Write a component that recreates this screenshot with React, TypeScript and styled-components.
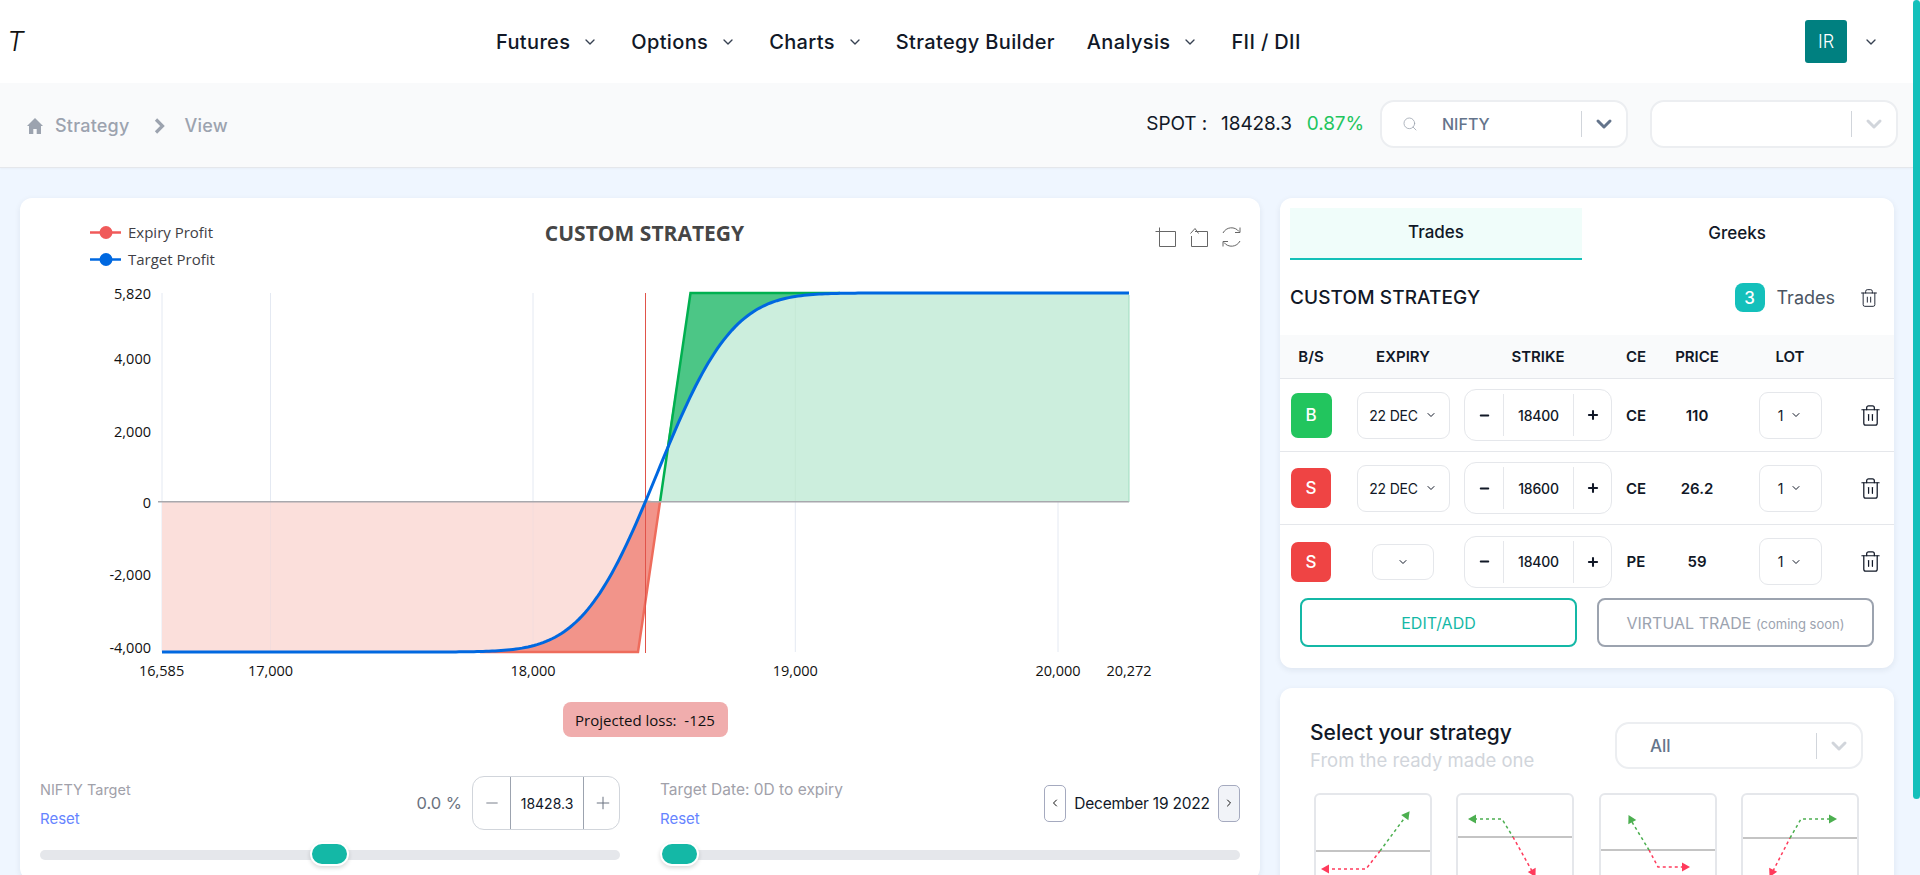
import React from "react";
import styled, { createGlobalStyle } from "styled-components";
import { ChevronDown, ChevronLeft, ChevronRight, Minus, Plus, Search, Trash2 } from "lucide-react";

const UI = `Inter, "Noto Sans", sans-serif`;
const CHART = `"Open Sans", "Noto Sans", sans-serif`;

const Global = createGlobalStyle`
  html { background: #eff6ff; }
  body { margin: 0; background: #eff6ff; font-family: ${UI}; color: #111827; }
  * { box-sizing: border-box; }
`;

const Page = styled.div`min-height: 958px; width: 1913px;`;
const ScrollThumb = styled.div`
  position: fixed; top: 0; right: 0; width: 7px; height: 799px; background: #14c0bb; border-radius: 4px;
`;

const Header = styled.header`
  height: 83px; background: #fff; display: flex; align-items: center; padding: 0 34px 0 7px;
`;
const Logo = styled.span`
  width: 489px; font: italic 300 27px ${UI}; color: #111;
`;
const Nav = styled.nav`display: flex; align-items: center; flex: 1;`;
const NavItem = styled.a<{ $gap?: number }>`
  display: flex; align-items: center; gap: 12px; margin-right: ${(p) => p.$gap ?? 33}px;
  font-size: 20px; font-weight: 500; color: #111827; letter-spacing: 0.35px; white-space: nowrap;
  svg { color: #374151; }
`;
const Avatar = styled.div`
  width: 42px; height: 43px; border-radius: 3px; background: #008080; color: #fff;
  display: flex; align-items: center; justify-content: center; font-size: 18px; font-weight: 300;
`;
const UserChevron = styled.span`display: flex; margin-left: 16px; color: #374151;`;

const SubBar = styled.div`
  height: 85px; background: #f9fafb; border-bottom: 1px solid #e5e7eb; box-shadow: 0 1px 2px rgba(0,0,0,.03);
  display: flex; align-items: center; justify-content: space-between; padding: 0 15px 0 27px;
`;
const Crumbs = styled.div`
  display: flex; align-items: center; color: #9ca3af; font-size: 18px; font-weight: 500; letter-spacing: 0.2px; margin-top: 1px;
`;
const Crumb = styled.span`margin-left: 12px;`;
const CrumbArrow = styled.svg`display: block; margin: 0 20px 0 24px;`;
const Spot = styled.div`display: flex; align-items: center; margin-top: -3px;`;
const SpotText = styled.span<{ $color?: string; $ml?: number }>`
  font-size: 19px; font-weight: 400; color: ${(p) => p.$color ?? "#111827"}; margin-left: ${(p) => p.$ml ?? 0}px;
  letter-spacing: -0.1px;
`;
const Select = styled.div<{ $w?: number; $ml?: number; $h?: number }>`
  width: ${(p) => p.$w ?? 248}px; height: ${(p) => p.$h ?? 48}px; margin-left: ${(p) => p.$ml ?? 0}px;
  background: #fff; border: 2px solid #eceef1; border-radius: 14px; display: flex; align-items: center;
  color: #64748b; font-size: 16px; font-weight: 500;
`;
const SelectIcon = styled.span`display: flex; margin-left: 20px; color: #9ca3af;`;
const SelectValue = styled.span<{ $ml: number; $size?: number }>`
  margin-left: ${(p) => p.$ml}px; font-size: ${(p) => p.$size ?? 16}px;
`;
const SelectArrow = styled.span<{ $muted?: boolean }>`
  margin-left: auto; width: 45px; height: 26px; border-left: 1px solid #d1d5db; display: flex;
  align-items: center; justify-content: center; color: ${(p) => (p.$muted ? "#d1d5db" : "#64748b")};
`;

const Main = styled.main`
  display: grid; grid-template-columns: 1240px 614px; gap: 20px; padding: 30px 19px 20px 20px; align-items: start;
`;
const Card = styled.section`
  background: #fff; border-radius: 12px; box-shadow: 0 2px 6px rgba(30,41,59,.08);
`;
const ChartDrawing = styled.svg`display: block; width: 1240px; height: 492px; font-family: ${CHART};`;
const PillRow = styled.div`display: flex; justify-content: flex-start; padding-left: 542.5px; margin-top: 12px;`;
const Pill = styled.div`
  width: 165px; height: 35px; border-radius: 8px; background: #f0adad; color: #111;
  font: 400 15px ${CHART}; display: flex; align-items: center; justify-content: center; white-space: pre;
`;
const Controls = styled.div`
  display: grid; grid-template-columns: 580px 580px; gap: 40px; padding: 39px 20px 20px;
`;
const ControlTop = styled.div`display: flex; align-items: center; justify-content: space-between; height: 54px;`;
const LabelBlock = styled.div`padding-top: 2px;`;
const Label = styled.div<{ $size: number }>`font-size: ${(p) => p.$size}px; color: #a1a1aa; line-height: 28px;`;
const ResetLink = styled.a`display: block; font-size: 15px; color: #6684ff; line-height: 28px; margin-top: 1px;`;
const Right = styled.div`display: flex; align-items: center;`;
const Pct = styled.span`font-size: 16.5px; color: #6b7280; margin-right: 10px;`;
const BigStepper = styled.div`
  width: 148px; height: 54px; border: 1px solid #d1d5db; border-radius: 12px; display: grid;
  grid-template-columns: 37px 74px 37px; align-items: stretch;
`;
const BigStepBtn = styled.span`display: flex; align-items: center; justify-content: center; color: #6b7280;`;
const BigStepValue = styled.span`
  display: flex; align-items: center; justify-content: center; font-size: 14px; color: #111827;
  border-left: 1px solid #9ca3af; border-right: 1px solid #9ca3af;
`;
const DateBtn = styled.span<{ $on?: boolean }>`
  width: 22px; height: 37px; border: 1px solid #a5aabf; border-radius: 5px; display: flex;
  align-items: center; justify-content: center; color: #111; background: ${(p) => (p.$on ? "#f1f3f8" : "#fff")};
`;
const DateText = styled.span`font-size: 15.5px; color: #111827; width: 152px; text-align: center; letter-spacing: -0.2px;`;
const Track = styled.div`height: 10px; margin-top: 20px; border-radius: 5px; background: #e5e7eb; position: relative;`;
const Thumb = styled.span<{ $left: number }>`
  position: absolute; left: ${(p) => p.$left}px; top: -8px; width: 39px; height: 24px; border-radius: 12px;
  background: #14b8a6; border: 2px solid #fff; box-shadow: 0 2px 4px rgba(0,0,0,.15);
`;

const Tabs = styled.div`display: grid; grid-template-columns: 292px 310px; padding: 10px 0 0 10px;`;
const Tab = styled.div<{ $on?: boolean }>`
  height: 52px; display: flex; align-items: center; justify-content: center; padding-bottom: ${(p) => (p.$on ? 2 : 0)}px;
  font-size: 17px; font-weight: 500; color: #111827;
  background: ${(p) => (p.$on ? "#f0fdfa" : "transparent")};
  border-bottom: 2px solid ${(p) => (p.$on ? "#14c0b8" : "transparent")};
`;
const TitleRow = styled.div`height: 75px; display: flex; align-items: center; padding: 0 15px 0 10px;`;
const StrategyTitle = styled.h2`margin: 0; font-size: 19px; font-weight: 500; letter-spacing: 0.1px; flex: 1; color: #111827;`;
const CountBadge = styled.span`
  width: 30px; height: 29px; border-radius: 8px; background: #14c0bb; color: #fff; display: flex;
  align-items: center; justify-content: center; font-size: 17px; font-weight: 500;
`;
const CountLabel = styled.span`font-size: 18px; color: #4b5563; margin: 0 24px 0 12px;`;
const TrashIcon = styled(Trash2)`color: #111827; display: block;`;

const COLS = "62px 122px 148px 48px 74px 112px 48px";
const TableHead = styled.div`
  display: grid; grid-template-columns: ${COLS}; height: 44px; align-items: center; text-align: center;
  background: #f9fafb; border-bottom: 1px solid #e5e7eb; font-size: 15px; font-weight: 600; color: #111827;
`;
const Row = styled.div<{ $last?: boolean }>`
  display: grid; grid-template-columns: ${COLS}; height: 73px; align-items: center; justify-items: center;
  border-bottom: ${(p) => (p.$last ? "none" : "1px solid #e5e7eb")}; font-size: 15px; font-weight: 600;
`;
const Side = styled.span<{ $buy?: boolean; $h: number }>`
  width: ${(p) => (p.$buy ? 41 : 40)}px; height: ${(p) => p.$h}px; border-radius: 7px; color: #fff;
  background: ${(p) => (p.$buy ? "#22c55e" : "#ef4444")}; display: flex; align-items: center;
  justify-content: center; font-size: 17px; font-weight: 500;
`;
const Pick = styled.span<{ $w: number; $h: number }>`
  width: ${(p) => p.$w}px; height: ${(p) => p.$h}px; border: 1px solid #e5e7eb; border-radius: 9px;
  display: flex; align-items: center; justify-content: center; gap: 7px; font-size: 14px; font-weight: 400; color: #111827;
  letter-spacing: -0.2px;
`;
const Stepper = styled.div`
  width: 148px; height: 52px; border: 1px solid #e5e7eb; border-radius: 12px; display: grid;
  grid-template-columns: 38px 71px 37px; align-items: center; justify-items: center;
`;
const StepValue = styled.span`
  width: 100%; height: 42px; display: flex; align-items: center; justify-content: center;
  border-left: 1px solid #e5e7eb; border-right: 1px solid #e5e7eb; font-size: 14px; font-weight: 500; letter-spacing: -0.2px;
`;
const Actions = styled.div`display: grid; grid-template-columns: 1fr 1fr; gap: 20px; padding: 0 20px 21px;`;
const ActionBtn = styled.button<{ $primary?: boolean }>`
  height: 49px; background: #fff; border-radius: 8px; font-family: ${UI}; font-size: 16px; font-weight: 400;
  border: 2px solid ${(p) => (p.$primary ? "#14b8a6" : "#9ca3af")}; color: ${(p) => (p.$primary ? "#14b8a6" : "#9ca3af")};
  padding: 0; white-space: nowrap;
`;
const Soon = styled.small`font-size: 13px;`;
const Stack = styled.div`display: flex; flex-direction: column; gap: 20px;`;
const PickerCard = styled(Card)`padding: 34px 31px 50px 30px; height: 250px;`;
const PickerHead = styled.div`display: flex; align-items: center; justify-content: space-between; height: 47px; margin-bottom: 24px;`;
const PickerText = styled.div`padding-top: 3px;`;
const PickerTitle = styled.div`font-size: 21px; font-weight: 500; color: #111827; line-height: 26px;`;
const PickerSub = styled.div`font-size: 18.5px; color: #d1d5db; line-height: 28px;`;
const MiniGrid = styled.div`display: grid; grid-template-columns: repeat(4, 118px); column-gap: 24.5px; padding-left: 3.5px;`;
const MiniCard = styled.div`height: 110px; border: 2px solid #e5e7eb; border-radius: 6px;`;
const MiniDrawing = styled.svg`display: block; width: 114px; height: 106px;`;

const erf = (x: number) => {
  const s = x < 0 ? -1 : 1;
  const a = Math.abs(x);
  const t = 1 / (1 + 0.5 * a);
  const r = t * Math.exp(-a * a - 1.26551223 + t * (1.00002368 + t * (0.37409196 + t * (0.09678418 + t * (-0.18628806 + t * (0.27886807 + t * (-1.13520398 + t * (1.48851587 + t * (-0.82215223 + t * 0.17087277)))))))));
  return s * (1 - r);
};
const curveY = (x: number) => 652 - 359 * 0.5 * (1 + erf((x - 657.5) / (59 * Math.SQRT2)));
const curve = (a: number, b: number, step = 3): string => {
  const pts: string[] = [];
  for (let x = a; x < b; x += step) pts.push(`${x} ${curveY(x).toFixed(2)}`);
  pts.push(`${b} ${curveY(b).toFixed(2)}`);
  return "M" + pts.join(" L");
};

const yTicks: [string, number][] = [["5,820", 293.5], ["4,000", 358.5], ["2,000", 431], ["0", 502], ["-2,000", 574.5], ["-4,000", 647]];
const xTicks: [string, number][] = [["16,585", 161.6], ["17,000", 270.5], ["18,000", 533], ["19,000", 795.3], ["20,000", 1058], ["20,272", 1129]];

const PayoffChart = () => (
  <ChartDrawing viewBox="20 198 1240 492">
    {[162, 270.5, 533, 795.3, 1058].map((x) => (
      <line key={x} x1={x} x2={x} y1={293} y2={652} stroke="#e4e9f2" strokeWidth={1} />
    ))}
    <polygon points="660,502 690.5,293 1129,293 1129,502" fill="#cceedd" />
    <polygon points="162,502 660,502 638,652 162,652" fill="#fbdfdb" />
    <line x1={795.3} x2={795.3} y1={293} y2={502} stroke="#c5e8d6" />
    <line x1={270.5} x2={270.5} y1={502} y2={652} stroke="#f3dcdc" />
    <line x1={533} x2={533} y1={502} y2={652} stroke="#f3dcdc" />
    <path d={`${curve(666, 840)} L690.5 293 Z`} fill="#4cc686" />
    <path d={`${curve(480, 646)} L660 502 L638 652 Z`} fill="#f2948a" />
    <polyline points="660,502 690.5,293 840,293" fill="none" stroke="#00b050" strokeWidth={2.5} />
    <polyline points="480,652 638,652 660,502" fill="none" stroke="#ee6c5c" strokeWidth={2.5} />
    <line x1={158} x2={1129} y1={501.7} y2={501.7} stroke="#a8a8ad" strokeWidth={1.5} />
    <line x1={645.5} x2={645.5} y1={293} y2={653} stroke="#e0534a" strokeWidth={1} />
    <path d={curve(162, 1129)} fill="none" stroke="#0068e0" strokeWidth={3} />
    <line x1={1129} x2={1129} y1={295} y2={502} stroke="#9fdcbf" />

    {yTicks.map(([t, y]) => (
      <text key={t} x={151} y={y + 5.5} textAnchor="end" fontSize={14.5} fill="#111">{t}</text>
    ))}
    {xTicks.map(([t, x]) => (
      <text key={t} x={x} y={676} textAnchor="middle" fontSize={14.5} fill="#111">{t}</text>
    ))}

    <line x1={90} x2={121} y1={232.5} y2={232.5} stroke="#f05a5a" strokeWidth={2.5} />
    <circle cx={106} cy={232.5} r={6.5} fill="#f05a5a" />
    <text x={128} y={238} fontSize={15} fill="#3f3f46">Expiry Profit</text>
    <line x1={90} x2={121} y1={259.5} y2={259.5} stroke="#0068e0" strokeWidth={2.5} />
    <circle cx={106} cy={259.5} r={6.5} fill="#0068e0" />
    <text x={128} y={265} fontSize={15} fill="#3f3f46">Target Profit</text>

    <text x={644.5} y={241} textAnchor="middle" fontSize={21} fontWeight={700} fill="#464646">CUSTOM STRATEGY</text>

    <g fill="none" stroke="#666" strokeWidth={1}>
      <path d="M1155.5 231.5 H1175.5 V246.5 H1159.5 V227.5" />
      <path d="M1190.5 233.5 L1195 228.5 L1198.5 233.5 M1195 231.5 H1207.5 V246.5 H1191.5 V236" />
      <path d="M1223 233 A9.500 9.500 0 0 1 1239 231.500 M1240 241 A9.500 9.500 0 0 1 1224 242.500" />
      <path d="M1235 232.500 L1240 232.500 L1240 227.500 M1228 241.500 L1223 241.500 L1223 246.500" />
    </g>
  </ChartDrawing>
);

const GREEN = "#4caf50";
const RED = "#ff3b5c";
const Head = ({ x, y, rot, c }: { x: number; y: number; rot: number; c: string }) => (
  <polygon points="-7,-4.5 1,0 -7,4.5" fill={c} transform={`translate(${x} ${y}) rotate(${rot})`} />
);
type Mini = { axis: number; red: string; green: string; heads: [number, number, number, string][] };
const minis: Mini[] = [
  { axis: 56, red: "10,74 50,74 64,56", green: "64,56 90,21", heads: [[6, 74, 180, RED], [93, 17, -53, GREEN]] },
  { axis: 42, red: "55,42 74,76", green: "16,24 44,24 55,42", heads: [[11, 24, 180, GREEN], [77, 81, 62, RED]] },
  { axis: 55, red: "48,55 57,72 82,72", green: "31,27 48,55", heads: [[28, 21, -118, GREEN], [88, 72, 0, RED]] },
  { axis: 43, red: "30,76 47,43", green: "47,43 58,24 87,24", heads: [[27, 81, 117, RED], [93, 24, 0, GREEN]] },
];
const MiniChart = ({ m }: { m: Mini }) => (
  <MiniCard>
    <MiniDrawing viewBox="0 0 114 106">
      <line x1={0} x2={114} y1={m.axis} y2={m.axis} stroke="#b0b0b0" strokeWidth={1.5} />
      <polyline points={m.red} fill="none" stroke={RED} strokeWidth={1.5} strokeDasharray="3 3" />
      <polyline points={m.green} fill="none" stroke={GREEN} strokeWidth={1.5} strokeDasharray="3 3" />
      {m.heads.map(([x, y, r, c]) => <Head key={`${x}${y}`} x={x} y={y} rot={r} c={c} />)}
    </MiniDrawing>
  </MiniCard>
);

const trades = [
  { side: "B", buy: true, h: 45, exp: "22 DEC", w: 93, eh: 47, strike: "18400", type: "CE", price: "110" },
  { side: "S", buy: false, h: 40, exp: "22 DEC", w: 93, eh: 47, strike: "18600", type: "CE", price: "26.2" },
  { side: "S", buy: false, h: 40, exp: "", w: 62, eh: 36, strike: "18400", type: "PE", price: "59" },
];

export default function App() {
  const Chev = <ChevronDown size={16} strokeWidth={2} />;
  return (
    <Page>
      <Global />
      <ScrollThumb />
      <Header>
        <Logo>T</Logo>
        <Nav>
          <NavItem>Futures {Chev}</NavItem>
          <NavItem>Options {Chev}</NavItem>
          <NavItem>Charts {Chev}</NavItem>
          <NavItem $gap={32}>Strategy Builder</NavItem>
          <NavItem>Analysis {Chev}</NavItem>
          <NavItem>FII / DII</NavItem>
        </Nav>
        <Avatar>IR</Avatar>
        <UserChevron>{Chev}</UserChevron>
      </Header>
      <SubBar>
        <Crumbs>
          <svg width="16" height="16" viewBox="0 0 16 16" fill="#9ca3af"><path d="M8 0 16 8h-2v8H9.700v-5H6.300v5H2V8H0z" /></svg>
          <Crumb>Strategy</Crumb>
          <CrumbArrow width="11" height="16" viewBox="0 0 11 16" fill="none" stroke="#9ca3af" strokeWidth="3.2"><path d="M2 1.500 8.500 8 2 14.500" /></CrumbArrow>
          <span>View</span>
        </Crumbs>
        <Spot>
          <SpotText>SPOT :</SpotText>
          <SpotText $ml={14}>18428.3</SpotText>
          <SpotText $ml={15} $color="#22c55e">0.87%</SpotText>
          <Select $ml={16}>
            <SelectIcon><Search size={16} strokeWidth={1.2} /></SelectIcon>
            <SelectValue $ml={24}>NIFTY</SelectValue>
            <SelectArrow><ChevronDown size={24} strokeWidth={3} /></SelectArrow>
          </Select>
          <Select $ml={22}>
            <SelectArrow $muted><ChevronDown size={24} strokeWidth={3} /></SelectArrow>
          </Select>
        </Spot>
      </SubBar>
      <Main>
        <Card>
          <PayoffChart />
          <PillRow><Pill>Projected loss:  -125</Pill></PillRow>
          <Controls>
            <div>
              <ControlTop>
                <LabelBlock>
                  <Label $size={14.5}>NIFTY Target</Label>
                  <ResetLink>Reset</ResetLink>
                </LabelBlock>
                <Right>
                  <Pct>0.0 %</Pct>
                  <BigStepper>
                    <BigStepBtn><Minus size={18} strokeWidth={1.2} /></BigStepBtn>
                    <BigStepValue>18428.3</BigStepValue>
                    <BigStepBtn><Plus size={20} strokeWidth={1.2} /></BigStepBtn>
                  </BigStepper>
                </Right>
              </ControlTop>
              <Track><Thumb $left={270} /></Track>
            </div>
            <div>
              <ControlTop>
                <LabelBlock>
                  <Label $size={15.5}>Target Date: 0D to expiry</Label>
                  <ResetLink>Reset</ResetLink>
                </LabelBlock>
                <Right>
                  <DateBtn><ChevronLeft size={12} strokeWidth={2} /></DateBtn>
                  <DateText>December 19 2022</DateText>
                  <DateBtn $on><ChevronRight size={12} strokeWidth={2} /></DateBtn>
                </Right>
              </ControlTop>
              <Track><Thumb $left={0} /></Track>
            </div>
          </Controls>
        </Card>
        <Stack>
          <Card>
            <Tabs>
              <Tab $on>Trades</Tab>
              <Tab>Greeks</Tab>
            </Tabs>
            <TitleRow>
              <StrategyTitle>CUSTOM STRATEGY</StrategyTitle>
              <CountBadge>3</CountBadge>
              <CountLabel>Trades</CountLabel>
              <TrashIcon size={20} strokeWidth={1.1} />
            </TitleRow>
            <TableHead>
              <span>B/S</span><span>EXPIRY</span><span>STRIKE</span><span>CE</span><span>PRICE</span><span>LOT</span><span />
            </TableHead>
            {trades.map((t, i) => (
              <Row key={i} $last={i === 2}>
                <Side $buy={t.buy} $h={t.h}>{t.side}</Side>
                <Pick $w={t.w} $h={t.eh}>{t.exp}{t.exp && " "}<ChevronDown size={12} strokeWidth={2} /></Pick>
                <Stepper>
                  <Minus size={13} strokeWidth={3.5} />
                  <StepValue>{t.strike}</StepValue>
                  <Plus size={14} strokeWidth={3.5} />
                </Stepper>
                <span>{t.type}</span>
                <span>{t.price}</span>
                <Pick $w={63} $h={47}>1 <ChevronDown size={12} strokeWidth={2} /></Pick>
                <TrashIcon size={23} strokeWidth={1.3} />
              </Row>
            ))}
            <Actions>
              <ActionBtn $primary>EDIT/ADD</ActionBtn>
              <ActionBtn>VIRTUAL TRADE <Soon>(coming soon)</Soon></ActionBtn>
            </Actions>
          </Card>
          <PickerCard>
            <PickerHead>
              <PickerText>
                <PickerTitle>Select your strategy</PickerTitle>
                <PickerSub>From the ready made one</PickerSub>
              </PickerText>
              <Select $h={47}>
                <SelectValue $ml={33} $size={17}>All</SelectValue>
                <SelectArrow $muted><ChevronDown size={24} strokeWidth={3} /></SelectArrow>
              </Select>
            </PickerHead>
            <MiniGrid>
              {minis.map((m, i) => <MiniChart key={i} m={m} />)}
            </MiniGrid>
          </PickerCard>
        </Stack>
      </Main>
    </Page>
  );
}
